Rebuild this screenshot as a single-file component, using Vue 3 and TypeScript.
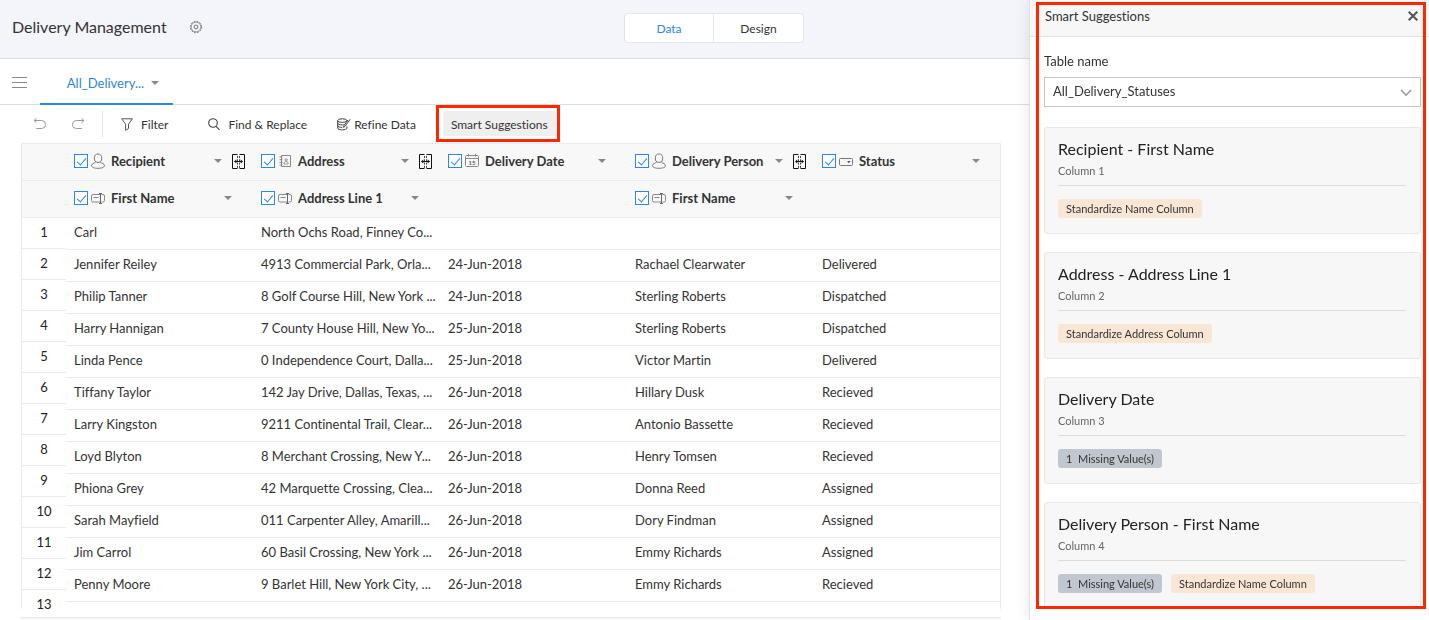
<script setup lang="ts">
import { ref } from 'vue'

type IconKind = 'person' | 'book' | 'date' | 'dropdown' | 'field'

interface HeadCell {
  label: string
  icon: IconKind
  mergeable?: boolean
}

interface Suggestion {
  title: string
  column: string
  tags: { text: string; kind: 'fix' | 'missing' }[]
}

const view = ref<'Data' | 'Design'>('Data')
const views = ['Data', 'Design'] as const
const tableName = ref('All_Delivery_Statuses')

const headRows: (HeadCell | null)[][] = [
  [
    { label: 'Recipient', icon: 'person', mergeable: true },
    { label: 'Address', icon: 'book', mergeable: true },
    { label: 'Delivery Date', icon: 'date' },
    { label: 'Delivery Person', icon: 'person', mergeable: true },
    { label: 'Status', icon: 'dropdown' },
  ],
  [
    { label: 'First Name', icon: 'field' },
    { label: 'Address Line 1', icon: 'field' },
    null,
    { label: 'First Name', icon: 'field' },
    null,
  ],
]

const rows: string[][] = [
  ['Carl', 'North Ochs Road, Finney Co...', '', '', ''],
  ['Jennifer Reiley', '4913 Commercial Park, Orla...', '24-Jun-2018', 'Rachael Clearwater', 'Delivered'],
  ['Philip Tanner', '8 Golf Course Hill, New York ...', '24-Jun-2018', 'Sterling Roberts', 'Dispatched'],
  ['Harry Hannigan', '7 County House Hill, New Yo...', '25-Jun-2018', 'Sterling Roberts', 'Dispatched'],
  ['Linda Pence', '0 Independence Court, Dalla...', '25-Jun-2018', 'Victor Martin', 'Delivered'],
  ['Tiffany Taylor', '142 Jay Drive, Dallas, Texas, ...', '26-Jun-2018', 'Hillary Dusk', 'Recieved'],
  ['Larry Kingston', '9211 Continental Trail, Clear...', '26-Jun-2018', 'Antonio Bassette', 'Recieved'],
  ['Loyd Blyton', '8 Merchant Crossing, New Y...', '26-Jun-2018', 'Henry Tomsen', 'Recieved'],
  ['Phiona Grey', '42 Marquette Crossing, Clea...', '26-Jun-2018', 'Donna Reed', 'Assigned'],
  ['Sarah Mayfield', '011 Carpenter Alley, Amarill...', '26-Jun-2018', 'Dory Findman', 'Assigned'],
  ['Jim Carrol', '60 Basil Crossing, New York ...', '26-Jun-2018', 'Emmy Richards', 'Assigned'],
  ['Penny Moore', '9 Barlet Hill, New York City, ...', '26-Jun-2018', 'Emmy Richards', 'Recieved'],
]

const suggestions: Suggestion[] = [
  { title: 'Recipient - First Name', column: 'Column 1', tags: [{ text: 'Standardize Name Column', kind: 'fix' }] },
  { title: 'Address - Address Line 1', column: 'Column 2', tags: [{ text: 'Standardize Address Column', kind: 'fix' }] },
  { title: 'Delivery Date', column: 'Column 3', tags: [{ text: '1\u00a0 Missing Value(s)', kind: 'missing' }] },
  {
    title: 'Delivery Person - First Name',
    column: 'Column 4',
    tags: [
      { text: '1\u00a0 Missing Value(s)', kind: 'missing' },
      { text: 'Standardize Name Column', kind: 'fix' },
    ],
  },
]
</script>

<template>
  <div class="page">
    <header class="topbar">
      <div class="brand">
        <h1>Delivery Management</h1>
        <button type="button" class="icon-btn" aria-label="Settings">
          <svg width="14" height="14" viewBox="0 0 14 14" fill="none" stroke="#666">
            <circle cx="7" cy="7" r="4.9" stroke-width=".7" />
            <circle cx="7" cy="7" r="5.7" stroke-width=".9" stroke-dasharray="1.6 1.38" />
            <circle cx="7" cy="7" r="1.9" stroke-width=".9" />
          </svg>
        </button>
      </div>
      <nav class="switch">
        <button v-for="v in views" :key="v" type="button" :class="{ active: view === v }" @click="view = v">{{ v }}</button>
      </nav>
    </header>

    <nav class="tabs">
      <button type="button" class="icon-btn menu" aria-label="Menu">
        <svg width="15" height="12" viewBox="0 0 15 12" stroke="#888" stroke-width="1">
          <path d="M0 1.5h15M0 6.5h15M0 11.5h15" />
        </svg>
      </button>
      <button type="button" class="tab">All_Delivery...<span class="caret"></span></button>
    </nav>

    <div class="toolbar">
      <button type="button" class="icon-btn undo" aria-label="Undo">
        <svg width="14" height="12" viewBox="0 0 14 12" fill="none" stroke="#999">
          <path d="M1 2.5h7.6a4 4 0 0 1 0 8H3.2M3.6 .3L1 2.5l2.6 2.2" />
        </svg>
      </button>
      <button type="button" class="icon-btn" aria-label="Redo">
        <svg width="14" height="12" viewBox="0 0 14 12" fill="none" stroke="#999">
          <path d="M13 2.5H5.4a4 4 0 0 0 0 8h5.4M10.4 .3L13 2.5l-2.6 2.2" />
        </svg>
      </button>
      <span class="divider"></span>
      <button type="button" class="tool">
        <svg width="12" height="13" viewBox="0 0 12 13" fill="none" stroke="#555">
          <path d="M.6 .8h10.8L7.5 6.2v4.3L4.6 12.3V6.2z" />
        </svg>
        Filter
      </button>
      <button type="button" class="tool find">
        <svg width="12" height="13" viewBox="0 0 12 13" fill="none" stroke="#444" stroke-width="1.1">
          <circle cx="5" cy="5" r="4.3" /><path d="M8 8.3l3.6 3.6" />
        </svg>
        Find &amp; Replace
      </button>
      <button type="button" class="tool refine">
        <svg width="14" height="13" viewBox="0 0 14 13" fill="none" stroke="#444">
          <ellipse cx="5.3" cy="2.6" rx="4.6" ry="1.8" />
          <path d="M.7 2.6v7.5c0 1 2 1.8 4.6 1.8s4.6-.8 4.6-1.8V8.4M.7 5.1c0 1 2 1.8 4.6 1.8l1.4-.1M.7 7.6c0 1 2 1.8 4.6 1.8M9.9 2.6v1" />
          <path d="M13.2 1.2L8 8.4l-1.4.9.3-1.7L11 2" />
        </svg>
        Refine Data
      </button>
      <span class="highlight">
        <button type="button" class="smart">Smart Suggestions</button>
      </span>
    </div>

    <main class="sheet">
      <div class="grid">
        <div class="gutter">
          <div class="gutter-head"></div>
          <div class="gutter-head"></div>
          <div v-for="n in 13" :key="n" class="num">{{ n }}</div>
        </div>
        <table>
          <colgroup>
            <col v-for="n in 4" :key="n" class="wide" />
            <col />
          </colgroup>
          <thead>
            <tr v-for="(hr, r) in headRows" :key="r">
              <component :is="cell ? 'th' : 'td'" v-for="(cell, c) in hr" :key="c">
                <div v-if="cell" class="head" :class="{ mergeable: cell.mergeable }">
                  <input type="checkbox" checked :aria-label="'Select ' + cell.label" />
                  <svg class="kind" width="14" height="16" viewBox="0 0 14 16" fill="none" stroke="#777">
                    <template v-if="cell.icon === 'person'">
                      <ellipse cx="7" cy="5.2" rx="3.7" ry="4.2" />
                      <path d="M4.7 8.6C4.6 9.7 3.9 9.8 2.9 10.200 1.400 10.700.6 11.600.6 12.800c0 1.600 2.600 2.500 6.400 2.500s6.400-.9 6.400-2.500c0-1.200-.8-2.100-2.300-2.600-1-.4-1.700-.5-1.800-1.600" />
                    </template>
                    <template v-else-if="cell.icon === 'book'">
                      <path d="M3.5 2.5h9v11h-9zM1.500 4h3M1.500 6.700h3M1.500 9.400h3M1.500 12h3" stroke="#888" />
                      <path d="M6 11c0-1.800.8-2.500 2.100-2.500s2.100.7 2.100 2.500z" stroke-width=".7" />
                      <circle cx="8.1" cy="6.9" r="1.2" stroke-width=".7" />
                    </template>
                    <template v-else-if="cell.icon === 'date'">
                      <path d="M.5 3.500q0-1 1-1h11q1 0 1 1v9q0 1-1 1h-11q-1 0-1-1zM.5 5.500h13M3.500 1v2.500M10.500 1v2.500" stroke="#888" />
                      <text x="7" y="12" text-anchor="middle" class="day">15</text>
                    </template>
                    <template v-else-if="cell.icon === 'dropdown'">
                      <rect x=".5" y="5.5" width="13" height="7" rx="1" />
                      <path d="M8 8h3.600l-1.800 2.200z" fill="#555" stroke="none" />
                    </template>
                    <template v-else>
                      <path d="M9 4.500H2q-1.500 0-1.500 1.500v4.500q0 1.500 1.500 1.500h7M10.500 4.500H12q1.500 0 1.500 1.500v4.500q0 1.500-1.500 1.500h-1.500M2.500 7.500h5" stroke="#888" />
                      <path d="M9.500 3.500v10M8 3.500h3M8 13.500h3" stroke="#666" />
                    </template>
                  </svg>
                  <span class="label">{{ cell.label }}</span>
                  <span class="caret"></span>
                  <button v-if="cell.mergeable" type="button" class="icon-btn" aria-label="Merge columns">
                    <svg width="13" height="15" viewBox="0 0 13 15" fill="none" stroke="#111">
                      <path d="M5.500 .5H.5v14h5M7.500 .5h5v14h-5" />
                      <path d="M5.500 2v12M7.500 2v12" stroke-dasharray="2 1.300" stroke="#444" />
                      <path d="M2 7.500L4.300 5.500v4zM11 7.500L8.700 5.500v4z" fill="#111" stroke="none" />
                      <path d="M3 7.500h7" />
                    </svg>
                  </button>
                </div>
              </component>
            </tr>
          </thead>
          <tbody>
            <tr v-for="(row, r) in rows" :key="r">
              <td v-for="(value, c) in row" :key="c">{{ value }}</td>
            </tr>
          </tbody>
        </table>
      </div>
      <div class="scroll-track"></div>
    </main>

    <aside class="drawer">
      <div class="drawer-head">
        <h2>Smart Suggestions</h2>
        <button type="button" class="icon-btn" aria-label="Close">
          <svg width="10" height="10" viewBox="0 0 10 10" stroke="#555" stroke-width="2"><path d="M.7 .7l8.6 8.6M9.3 .7L.7 9.3" /></svg>
        </button>
      </div>
      <div class="drawer-body">
        <label for="table-name">Table name</label>
        <div class="select">
          <select id="table-name" v-model="tableName">
            <option>All_Delivery_Statuses</option>
          </select>
          <svg width="12" height="8" viewBox="0 0 12 8" fill="none" stroke="#999" stroke-width="1.6"><path d="M1 1l5 5.200L11 1" /></svg>
        </div>
        <section v-for="s in suggestions" :key="s.title" class="card">
          <h3>{{ s.title }}</h3>
          <p>{{ s.column }}</p>
          <div class="tags">
            <button v-for="t in s.tags" :key="t.text" type="button" class="tag" :class="t.kind">{{ t.text }}</button>
          </div>
        </section>
      </div>
      <div class="drawer-outline"></div>
    </aside>
  </div>
</template>

<style>
body {
  margin: 0;
  overflow: hidden;
}
</style>

<style scoped>
.page {
  display: flex;
  flex-direction: column;
  height: 100vh;
  background: #fff;
  color: #333;
  font-family: Lato, "Liberation Sans", sans-serif;
  font-size: 13px;
  font-variant-ligatures: none;
}
.page *,
.page {
  box-sizing: border-box;
}
button,
select {
  font: inherit;
  font-variant-ligatures: none;
  color: inherit;
  cursor: pointer;
}
button {
  border: 0;
  padding: 0;
  background: none;
}
h1,
h2,
h3,
p {
  margin: 0;
  font-weight: 400;
}
.icon-btn {
  display: flex;
  flex: none;
}
.caret {
  flex: none;
  border: 4px solid transparent;
  border-top-color: #888;
  border-bottom: 0;
}

.topbar {
  display: grid;
  grid-template-columns: 1fr auto 1fr;
  align-items: center;
  flex: none;
  height: 59px;
  padding: 0 13px 0 12px;
  background: #f4f5fa;
  border-bottom: 1px solid #dcdee2;
}
.brand {
  display: flex;
  align-items: center;
  gap: 22px;
  padding-bottom: 4px;
}
h1 {
  font-size: 16px;
  line-height: 24px;
}
.switch {
  display: flex;
  margin-bottom: 2px;
}
.switch button {
  width: 90px;
  height: 30px;
  border: 1px solid #e6e7ea;
  border-radius: 3px 0 0 3px;
  background: #fff;
  font-size: 12px;
}
.switch button + button {
  border-left: 0;
  border-radius: 0 3px 3px 0;
}
.switch .active {
  color: #2f86e0;
}

.tabs {
  display: flex;
  flex: none;
  height: 46px;
  padding-left: 12px;
  border-bottom: 1px solid #dcdee0;
}
.menu {
  align-items: center;
  margin-right: 13px;
}
.tab {
  display: flex;
  align-items: center;
  justify-content: center;
  gap: 7px;
  width: 133px;
  height: 46px;
  padding: 4px 14px 0 27px;
  border-bottom: 2px solid #2f86e0;
  color: #2f86e0;
  white-space: nowrap;
}

.toolbar {
  display: flex;
  align-items: center;
  flex: none;
  height: 38px;
  padding: 0 0 1px 33px;
  font-size: 12px;
}
.undo {
  margin-right: 24px;
}
.divider {
  width: 1px;
  height: 26px;
  margin: 0 18px 0 17px;
  background: #e4e4e4;
}
.tool {
  display: flex;
  align-items: center;
  gap: 8px;
  height: 26px;
  padding-top: 1px;
  white-space: nowrap;
}
.find {
  margin-left: 40px;
}
.refine {
  gap: 3px;
  margin-left: 30px;
}
.highlight {
  display: flex;
  margin-left: 20px;
  padding: 3px 1px 3px 4px;
  border: 3px solid #ff2600;
}
.smart {
  height: 25px;
  padding: 1px 8px 0;
  border-radius: 2px;
  background: #efefef;
  white-space: nowrap;
}

.sheet {
  display: flex;
  flex-direction: column;
  flex: 1;
  min-height: 0;
  gap: 8px;
  margin-left: 21px;
  margin-right: 428px;
}
.grid {
  display: flex;
  flex: 1;
  min-height: 0;
  border: 1px solid #ebebeb;
  border-bottom: 0;
}
.gutter {
  flex: none;
  width: 44px;
}
.gutter-head {
  height: 37px;
  background: #f8f8f8;
  border-bottom: 1px solid #ebebeb;
}
.num {
  height: 31px;
  border-bottom: 1px solid #ebebeb;
  color: #222;
  line-height: 29px;
  text-align: center;
}
.num:last-child {
  height: 19px;
  border-bottom: 0;
}
table {
  flex: 1;
  align-self: flex-start;
  width: 100%;
  table-layout: fixed;
  border-collapse: separate;
  border-spacing: 0;
}
.wide {
  width: 187px;
}
thead th,
thead td {
  height: 37px;
  padding: 0 0 2px 8px;
  background: #f8f8f8;
  border-bottom: 1px solid #ebebeb;
  text-align: left;
}
tbody td {
  height: 32px;
  padding: 0 0 4px 8px;
  border-bottom: 1px solid #ebebeb;
  overflow: hidden;
  white-space: nowrap;
}
.head {
  display: flex;
  align-items: center;
  width: 158px;
}
.mergeable {
  width: 171px;
}
.head input {
  appearance: none;
  flex: none;
  width: 14px;
  height: 14px;
  margin: 0 3px 0 0;
  border: 1px solid #2f86e0;
  background: #fff;
}
.head input:checked::before {
  content: "";
  display: block;
  width: 4px;
  height: 8px;
  margin: 1px auto 0;
  border: solid #2f86e0;
  border-width: 0 1px 1px 0;
  transform: rotate(40deg);
}
.kind {
  flex: none;
  margin-right: 6px;
}
.day {
  font-size: 6px;
  font-weight: 700;
  fill: #666;
  stroke: none;
}
.label {
  flex: 1;
  font-weight: 700;
  white-space: nowrap;
}
.mergeable .caret {
  margin-right: 10px;
}
.scroll-track {
  flex: none;
  height: 3px;
  background: #f7f7f7;
  border-top: 1px solid #e6e6e6;
}

.drawer {
  position: fixed;
  top: 0;
  right: 0;
  display: flex;
  flex-direction: column;
  width: 400px;
  height: 100vh;
  padding-bottom: 13px;
  background: #fff;
  border-left: 1px solid #e0e2e6;
  box-shadow: 0 0 14px rgba(0, 0, 0, 0.1);
}
.drawer-head {
  display: flex;
  align-items: center;
  justify-content: space-between;
  flex: none;
  height: 37px;
  padding: 0 11px 5px 15px;
  background: #f7f7f7;
  border-bottom: 1px solid #dfe2e6;
}
h2 {
  font-size: 13px;
}
.drawer-body {
  display: flex;
  flex-direction: column;
  flex: 1;
  min-height: 0;
  overflow: hidden;
  padding: 16px 8px 0 14px;
}
label {
  margin-bottom: 8px;
  line-height: 16px;
}
.select {
  display: grid;
  align-items: center;
  flex: none;
  margin-bottom: 20px;
}
.select > * {
  grid-area: 1 / 1;
}
.select select {
  appearance: none;
  width: 100%;
  height: 30px;
  padding: 0 30px 2px 8px;
  border: 1px solid #c1c5cc;
  border-radius: 0;
  background: #fff;
}
.select svg {
  justify-self: end;
  margin: 2px 9px 0 0;
  pointer-events: none;
}
.card {
  flex: none;
  margin-bottom: 18px;
  padding: 9px 14px 15px 13px;
  background: #f7f7f7;
  border: 1px solid #e8e8e8;
  border-radius: 3px;
}
h3 {
  color: #222;
  font-size: 16px;
  line-height: 24px;
}
.card p {
  margin-top: 2px;
  color: #666;
  font-size: 11px;
  line-height: 16px;
}
.tags {
  display: flex;
  gap: 9px;
  margin-top: 6px;
  padding-top: 13px;
  border-top: 1px solid #dcdcdc;
}
.tag {
  height: 19px;
  padding: 0 8px;
  border-radius: 3px;
  font-size: 11px;
  line-height: 19px;
  white-space: nowrap;
}
.fix {
  background: #f9e6d5;
}
.missing {
  background: #c1c7cf;
}
.drawer-outline {
  position: absolute;
  inset: 2px 3px 11px 6px;
  border: 3px solid #ff2600;
  pointer-events: none;
}
</style>
